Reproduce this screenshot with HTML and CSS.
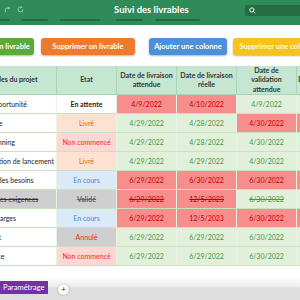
FILE: index.html
```html
<!DOCTYPE html>
<html lang="fr">
<head>
    <meta charset="UTF-8">
    <meta name="viewport" content="width=device-width, initial-scale=1.0">
    <title>Suivi des livrables</title>
    <link rel="stylesheet" href="styles.css">
</head>
<body>

    <header class="topbar">
        <div class="topbar-row">
            <div class="quick-icons">
                <svg width="7" height="7" viewBox="0 0 10 10"><path d="M2 9 V5 Q2 3 4 3 H8 M6 1 L8 3 L6 5" fill="none" stroke="currentColor" stroke-width="1.4"/></svg>
                <svg width="7" height="7" viewBox="0 0 10 10"><path d="M8.5 5 A3.5 3.5 0 1 1 6.5 1.8 M6 0.5 L7 2 L5.3 2.8" fill="none" stroke="currentColor" stroke-width="1.4"/></svg>
            </div>
            <h1 class="title">Suivi des livrables</h1>
            <div class="search">
                <svg width="7" height="7" viewBox="0 0 10 10"><circle cx="4.2" cy="4.2" r="3" fill="none" stroke="#fff" stroke-width="1.4"/><path d="M6.5 6.5 L9 9" stroke="#fff" stroke-width="1.4"/></svg>
            </div>
        </div>
        <div class="tabs">
            <span class="seg seg1"></span>
            <span class="seg seg2"></span>
            <span class="seg seg3"></span>
            <span class="seg seg4"></span>
            <span class="seg seg5"></span>
        </div>
    </header>

    <div class="toolbar">
        <button class="btn btn-green">Ajouter un livrable</button>
        <button class="btn btn-orange">Supprimer un livrable</button>
        <button class="btn btn-blue">Ajouter une colonne</button>
        <button class="btn btn-yellow">Supprimer une colonne</button>
    </div>

    <div class="sheet">
        <div class="grid">
            <div class="th th-first">Livrables du projet</div>
            <div class="th">Etat</div>
            <div class="th">Date de livraison attendue</div>
            <div class="th">Date de livraison réelle</div>
            <div class="th th-narrow">Date de validation attendue</div>
            <div class="th">Date de validation</div>

            <div class="td name">Fiche opportunité</div>
            <div class="td st-wait">En attente</div>
            <div class="td late">4/9/2022</div>
            <div class="td late">4/10/2022</div>
            <div class="td ok">4/9/2022</div>
            <div class="td ok"></div>

            <div class="td name">Pré-étude</div>
            <div class="td st-done">Livré</div>
            <div class="td ok">4/29/2022</div>
            <div class="td ok">4/28/2022</div>
            <div class="td late">4/30/2022</div>
            <div class="td late"></div>

            <div class="td name">Rétroplanning</div>
            <div class="td st-todo">Non commencé</div>
            <div class="td ok">4/29/2022</div>
            <div class="td ok">4/28/2022</div>
            <div class="td ok">4/30/2022</div>
            <div class="td ok"></div>

            <div class="td name">Présentation de lancement</div>
            <div class="td st-done">Livré</div>
            <div class="td ok">4/29/2022</div>
            <div class="td ok">4/29/2022</div>
            <div class="td ok">4/30/2022</div>
            <div class="td ok"></div>

            <div class="td name">Analyse des besoins</div>
            <div class="td st-run">En cours</div>
            <div class="td late">6/29/2022</div>
            <div class="td late">6/30/2022</div>
            <div class="td late">6/30/2022</div>
            <div class="td late"></div>

            <div class="td name struck grey">Recueil des exigences</div>
            <div class="td st-valid struck">Validé</div>
            <div class="td late struck">6/29/2022</div>
            <div class="td late struck">12/5/2023</div>
            <div class="td ok struck">6/30/2022</div>
            <div class="td ok"></div>

            <div class="td name">Calcul charges</div>
            <div class="td st-run">En cours</div>
            <div class="td late">6/29/2022</div>
            <div class="td late">12/5/2023</div>
            <div class="td late">6/30/2022</div>
            <div class="td late"></div>

            <div class="td name">Go projet</div>
            <div class="td st-cancel">Annulé</div>
            <div class="td ok">6/29/2022</div>
            <div class="td ok">6/29/2022</div>
            <div class="td ok">6/30/2022</div>
            <div class="td ok"></div>

            <div class="td name">Assistance</div>
            <div class="td st-todo">Non commencé</div>
            <div class="td ok">6/29/2022</div>
            <div class="td ok">6/29/2022</div>
            <div class="td ok">6/30/2022</div>
            <div class="td ok"></div>
        </div>
    </div>

    <footer class="sheetbar">
        <span class="sheet-tab">Paramétrage</span>
        <span class="add-sheet">+</span>
    </footer>

</body>
</html>
```

FILE: styles.css
```css
body {
    margin: 0;
    width: 300px;
    height: 300px;
    overflow: hidden;
    background: #fff;
    font-family: Lato, "Open Sans", sans-serif;
    display: flex;
    flex-direction: column;
}

/* top green bar */
.topbar {
    height: 25px;
    background-color: #2f8b57;
    display: flex;
    flex-direction: column;
    flex-shrink: 0;
}
.topbar-row {
    height: 19px;
    display: flex;
    align-items: center;
}
.quick-icons {
    width: 110px;
    display: flex;
    gap: 6px;
    padding-left: 4px;
    color: #9fd2b1;
}
.title {
    margin: 0;
    width: 131px;
    font-size: 9.5px;
    font-weight: 700;
    color: #fff;
}
.search {
    flex: 1;
    height: 11px;
    margin-top: 1px;
    background-color: #246c43;
    border-radius: 2px 0 0 2px;
    display: flex;
    align-items: center;
    padding-left: 4px;
}
.tabs {
    display: flex;
    height: 2px;
}
.seg {
    height: 2px;
    border-radius: 1px;
    background-color: #1f6a3d;
}
.seg1 { width: 10px; }
.seg2 { width: 27px; margin-left: 11px; }
.seg3 { width: 40px; margin-left: 12px; }
.seg4 { width: 27px; margin-left: 16px; }
.seg5 { width: 45px; margin-left: 12px; }

/* action buttons */
.toolbar {
    display: flex;
    margin: 13px 0 0 -36px;
    height: 17px;
    flex-shrink: 0;
}
.btn {
    border: none;
    border-radius: 3px;
    padding: 0;
    font-family: Lato, "Open Sans", sans-serif;
    font-size: 7.5px;
    font-weight: 700;
    color: #fff;
    white-space: nowrap;
    box-shadow: 0 1px 2px rgba(0, 0, 0, 0.3);
    flex-shrink: 0;
}
.btn-green { width: 70px; background-color: #5aab3b; }
.btn-orange { width: 94px; margin-left: 7px; background-color: #ee7a2d; }
.btn-blue { width: 78px; margin-left: 14px; background-color: #4b90d8; }
.btn-yellow { width: 90px; margin-left: 6px; background-color: #f7c21a; color: #fff6d8; }

/* sheet table */
.sheet {
    margin-top: 11px;
    margin-left: -37px;
    flex-shrink: 0;
}
.grid {
    display: grid;
    grid-template-columns: 94px 60px 60px 60px 60px 60px;
    grid-template-rows: 29px repeat(9, 19px);
    font-size: 7px;
}
.th {
    background-color: #c5e7d1;
    border-right: 1px solid #a8d4b8;
    border-bottom: 1px solid #a8d4b8;
    color: #333;
    font-weight: 700;
    text-align: center;
    line-height: 9.5px;
    display: flex;
    align-items: center;
    justify-content: center;
    padding: 0 1px;
}
.th-first {
    justify-content: flex-start;
    padding-left: 17px;
    text-align: left;
}
.th-narrow { padding: 0 12px; }
.td {
    display: flex;
    align-items: center;
    justify-content: center;
    border-bottom: 1px solid #c7e2bd;
    border-right: 1px solid #e9f3e4;
    white-space: nowrap;
    overflow: hidden;
}
.name {
    justify-content: flex-start;
    padding-left: 9px;
    background-color: #fff;
    color: #222;
}
.grey { background-color: #cfcfcf; color: #333; }
.ok { background-color: #e2efda; color: #3b9d4a; }
.late { background-color: #f68e8e; color: #c00000; }
.st-wait { background-color: #fff; color: #222; font-weight: 700; }
.st-done { background-color: #fde2d2; color: #d46b2a; }
.st-todo { background-color: #ffd6d6; color: #e23232; }
.st-run { background-color: #dce9f6; color: #4b86d0; }
.st-valid { background-color: #cfcfcf; color: #666; font-weight: 700; }
.st-cancel { background-color: #cfcfcf; color: #e03030; }
.struck { text-decoration: line-through; }

/* sheet tabs at the bottom */
.sheetbar {
    margin-top: auto;
    height: 34px;
    background: linear-gradient(#fff 0, #fff 10px, #efefef 20px, #dedede 22px, #dedede 100%);
    display: flex;
    align-items: flex-start;
    padding-top: 15px;
    box-sizing: border-box;
}
.sheet-tab {
    height: 13px;
    width: 48px;
    background-color: #7430a6;
    color: #fff;
    font-size: 7.5px;
    line-height: 13px;
    padding-left: 3px;
    box-sizing: border-box;
    white-space: nowrap;
}
.add-sheet {
    width: 11px;
    height: 11px;
    margin: 3px 0 0 10px;
    border-radius: 50%;
    background-color: #fafafa;
    box-shadow: 0 0 2px rgba(0, 0, 0, 0.35);
    font-size: 8px;
    line-height: 11px;
    text-align: center;
    color: #333;
}
```
